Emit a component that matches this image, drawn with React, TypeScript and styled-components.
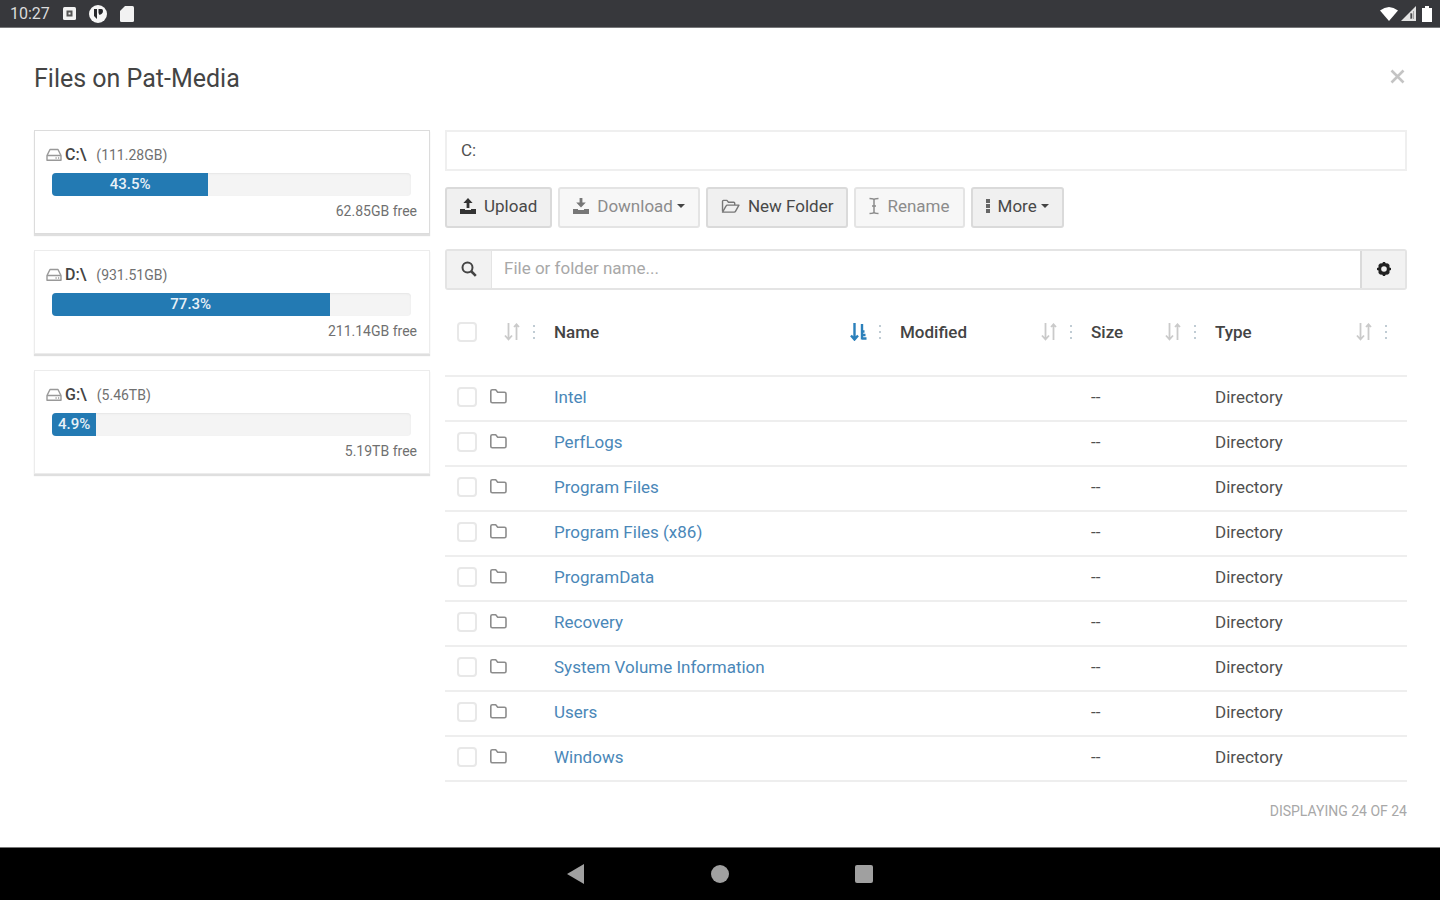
import React from "react";
import styled, { createGlobalStyle, css } from "styled-components";

const GlobalStyle = createGlobalStyle`
  *, *::before, *::after { box-sizing: border-box; }
  body {
    margin: 0;
    background: #fff;
    color: #505050;
    font-family: Roboto, "Liberation Sans", sans-serif;
    font-size: 17px;
    line-height: 20px;
  }
  button, input { font: inherit; color: inherit; }
  svg { display: block; flex: none; }
`;

const Screen = styled.div`
  display: flex;
  flex-direction: column;
  min-height: 100vh;
`;

const StatusBar = styled.div`
  display: flex;
  align-items: center;
  justify-content: space-between;
  height: 28px;
  padding: 0 8px 0 10px;
  border-bottom: 1px solid #77787a;
  background: #37383c;
  color: #dcdcdc;
  font-size: 16px;
`;

const StatusGroup = styled.div<{ $gap: number }>`
  display: flex;
  align-items: center;
  gap: ${(p) => p.$gap}px;
`;

const Page = styled.main`
  flex: 1;
  padding: 36px 33px 0 34px;
`;

const Header = styled.header`
  display: flex;
  justify-content: space-between;
  align-items: center;
  height: 30px;
  margin-bottom: 36px;
`;

const Title = styled.h1`
  margin: 0;
  color: #444;
  font-size: 25px;
  font-weight: 400;
  line-height: 30px;
`;

const IconButton = styled.button`
  display: flex;
  padding: 0;
  border: 0;
  background: none;
  cursor: pointer;
`;

const CloseButton = styled(IconButton)`
  padding: 0 2px 6px 0;
`;

const Columns = styled.div`
  display: grid;
  grid-template-columns: 7fr 17fr;
  gap: 15px;
`;

const DriveList = styled.div`
  display: flex;
  flex-direction: column;
  gap: 16px;
`;

const DriveCard = styled.section<{ $active?: boolean }>`
  padding: 14px 12px 12px 11px;
  border: 1px solid ${(p) => (p.$active ? "#dcdcdc" : "#ececec")};
  box-shadow: 0 2px 1px #dfdfdf;
  font-size: 14px;
`;

const DriveLabel = styled.div`
  display: flex;
  align-items: center;
  gap: 3px;
  color: #707070;
`;

const DriveName = styled.span`
  margin-right: 7px;
  color: #444;
  font-size: 16px;
  font-weight: 500;
`;

const Track = styled.div`
  height: 23px;
  margin: 8px 6px 5px;
  overflow: hidden;
  border-radius: 4px;
  background: #f4f4f4;
  box-shadow: inset 0 1px 2px #e6e6e6;
`;

const Fill = styled.div`
  height: 100%;
  background: #237ab3;
  color: #e8f1f7;
  font-size: 15px;
  font-weight: 500;
  line-height: 23px;
  text-align: center;
`;

const Free = styled.div`
  color: #707070;
  text-align: right;
`;

const PathInput = styled.input`
  display: block;
  width: 100%;
  height: 41px;
  padding: 0 14px 2px;
  border: 2px solid #efefef;
  outline: none;
`;

const Toolbar = styled.div`
  display: flex;
  gap: 6px;
  margin: 16px 0 21px;
`;

const ToolButton = styled.button`
  display: flex;
  align-items: center;
  gap: 8px;
  height: 41px;
  padding: 0 13px 3px;
  border: 2px solid #dadada;
  border-radius: 3px;
  background: #f0f0f0;
  color: #484848;
  white-space: nowrap;

  &:disabled {
    border-color: #e4e4e4;
    background: #f7f7f7;
    color: #8c8c8c;
  }
`;

const MenuLabel = styled.span`
  display: flex;
  align-items: center;
  gap: 4px;
`;

const SearchBar = styled.div`
  display: flex;
  height: 41px;
  border: 2px solid #e4e4e4;
  border-radius: 3px;
`;

const addon = css`
  display: flex;
  align-items: center;
  justify-content: center;
  width: 45px;
  background: #f2f2f2;
`;

const SearchLabel = styled.label`
  ${addon}
  border-right: 1px solid #e4e4e4;
`;

const SettingsButton = styled.button`
  ${addon}
  padding: 0;
  border: 0;
  border-left: 2px solid #dadada;
`;

const SearchInput = styled.input`
  flex: 1;
  min-width: 0;
  padding: 0 12px 3px;
  border: 0;
  outline: none;
  &::placeholder { color: #a8a8a8; opacity: 1; }
`;

const FileTable = styled.table`
  width: 100%;
  margin-top: 20px;
  border-collapse: collapse;
  table-layout: fixed;
`;

const Col = styled.col<{ $width: number }>`
  width: ${(p) => p.$width}px;
`;

const HeadCell = styled.th<{ $last?: boolean }>`
  height: 66px;
  padding: 12px ${(p) => (p.$last ? 19 : 10)}px 0 8px;
  border-bottom: 2px solid #eee;
  color: #444;
  font-weight: 500;
  text-align: left;
  vertical-align: top;
`;

const HeadInner = styled.div`
  display: flex;
  align-items: center;
  justify-content: space-between;
  height: 20px;
`;

const HeadTools = styled.div`
  display: flex;
  align-items: center;
  gap: 12px;
`;

const Cell = styled.td`
  height: 45px;
  padding: 0 8px 4px;
  border-bottom: 2px solid #eee;
`;

const SelectCell = styled.div`
  display: flex;
  align-items: center;
  gap: 13px;
  padding-left: 4px;
`;

const Checkbox = styled.input`
  appearance: none;
  width: 20px;
  height: 20px;
  margin: 0 0 0 4px;
  border: 2px solid #e8e8e8;
  border-radius: 4px;
  background: #fff;

  ${SelectCell} & { margin: 0; }
`;

const FileLink = styled.a`
  color: #4a87b8;
  text-decoration: none;
`;

const Summary = styled.p`
  margin: 19px 0 0;
  color: #a8a8a8;
  font-size: 14px;
  text-align: right;
`;

const NavBar = styled.nav`
  display: flex;
  align-items: center;
  justify-content: center;
  gap: 124px;
  height: 53px;
  border-top: 1px solid #777;
  background: #000;
`;

const DriveIcon = () => (
  <svg width="16" height="14" viewBox="0 0 16 14" fill="none" stroke="#999" strokeWidth="1.4">
    <path d="M1 7.500 4 1.500h8l3 6v4.800H1zM1 7.500h14" strokeLinejoin="round" />
    <path d="M9.500 10h1.200M12 10h1.200" />
  </svg>
);

const TransferIcon = ({ down }: { down?: boolean }) => (
  <svg width="16" height="16" viewBox="0 0 16 16" fill={down ? "#777" : "#333"}>
    <path d={down ? "M6.6 0h2.800v4.500h3.400L8 9.600 3.200 4.500h3.400z" : "M8 0l4.600 5H9.400v5H6.600V5H3.400z"} />
    <path d="M0 11h5v1h6v-1h5v5H0z" />
  </svg>
);

const FolderOpenIcon = () => (
  <svg width="19" height="15" viewBox="0 0 20 16" fill="none" stroke="#777" strokeWidth="1.500" strokeLinejoin="round">
    <path d="M1.500 13V2.500q0-1 1-1h3.700l1.600 2h5.700q1 0 1 1v2" />
    <path d="M1.500 14 5.300 7.300q.4-.8 1.200-.8H19l-3.700 6.700q-.4.8-1.300.8z" />
  </svg>
);

const CursorIcon = () => (
  <svg width="10" height="18" viewBox="1 0 10 18" fill="none" stroke="currentColor" strokeWidth="1.500">
    <path d="M1.500 1.500Q6 1.500 6 3v12q0 1.500-4.500 1.500M10.500 1.500Q6 1.500 6 3M10.500 16.500Q6 16.500 6 15M4 9h4" />
  </svg>
);

const MoreIcon = () => (
  <svg width="4" height="14" viewBox="0 0 4 14" fill="#666">
    <path d="M0 0h4v4H0zM0 5h4v4H0zM0 10h4v4H0z" />
  </svg>
);

const Caret = () => (
  <svg width="8" height="4" viewBox="0 0 8 4" fill="#444"><path d="M0 0h8L4 4z" /></svg>
);

const SearchIcon = () => (
  <svg width="16" height="18" viewBox="0 0 16 18" fill="none" stroke="#444">
    <circle cx="6.500" cy="6.500" r="5" strokeWidth="2" />
    <path d="M10 10l4.800 4.800" strokeWidth="2.600" />
  </svg>
);

const GearIcon = () => (
  <svg width="14" height="16" viewBox="0 0 14 16">
    <path d="M6 0h2l.6 1.300L11 1.500 12.500 3v2.400L14 6v2l-1.500.6V11L11 12.500l-2.400.2L8 14H6l-.6-1.300L3 12.500 1.500 11V8.600L0 8V6l1.500-.6V3L3 1.500l2.400-.2z" fill="#222" />
    <circle cx="7" cy="7" r="2.800" fill="#f0f0f0" />
  </svg>
);

const SortIcon = ({ active }: { active?: boolean }) => (
  <svg width="17" height="18" viewBox="0 0 17 18" fill="none" stroke={active ? "#2b80bb" : "#cacaca"} strokeWidth={active ? 2.4 : 1.8}>
    <path d="M4.500 0v16.500M1 12.500l3.500 4 3.500-4" />
    {active ? (
      <path d="M12 1v15.500M12 8.500h2.500M12 12h3.500M12 15.500h4.500" />
    ) : (
      <path d="M12.500 17V1.500M10 4l2.500-2.700L15 4" />
    )}
  </svg>
);

const DotsIcon = () => (
  <svg width="3" height="14" viewBox="0 0 3 14" fill="#c0ccd4">
    <path d="M0 0h2v2H0zM0 6h2v2H0zM0 12h2v2H0z" />
  </svg>
);

const FolderIcon = () => (
  <svg width="17" height="15" viewBox="0 0 17 15" fill="none" stroke="#8c8c8c" strokeWidth="1.600" strokeLinejoin="round">
    <path d="M.8 12.200V2.300q0-1.500 1.500-1.500h3.400l2 2.400h6.800q1.500 0 1.500 1.500v7.500q0 1.500-1.500 1.500H2.300q-1.500 0-1.500-1.500z" />
  </svg>
);

const drives = [
  { name: "C:\\", size: "111.28GB", used: 43.5, free: "62.85GB", bar: 43.5 },
  { name: "D:\\", size: "931.51GB", used: 77.3, free: "211.14GB", bar: 77.3 },
  { name: "G:\\", size: "5.46TB", used: 4.9, free: "5.19TB", bar: 12.3 },
];

const headings = [
  { label: "Name", active: true },
  { label: "Modified" },
  { label: "Size" },
  { label: "Type", last: true },
];

const folders = [
  "Intel", "PerfLogs", "Program Files", "Program Files (x86)", "ProgramData",
  "Recovery", "System Volume Information", "Users", "Windows",
];

const SortTools = ({ label, active }: { label: string; active?: boolean }) => (
  <HeadTools>
    <IconButton aria-label={`Sort by ${label}`}><SortIcon active={active} /></IconButton>
    <IconButton aria-label={`${label} column options`}><DotsIcon /></IconButton>
  </HeadTools>
);

export default function App() {
  return (
    <Screen>
      <GlobalStyle />
      <StatusBar>
        <StatusGroup $gap={13}>
          <span>10:27</span>
          <svg width="13" height="13" viewBox="0 0 13 13">
            <rect width="13" height="13" rx="1.500" fill="#f2f2f2" />
            <rect x="3.500" y="3.500" width="6" height="6" fill="#555" />
            <rect x="5.500" y="5.500" width="2" height="2" fill="#f2f2f2" />
          </svg>
          <svg width="18" height="18" viewBox="0 0 18 18">
            <circle cx="9" cy="9" r="9" fill="#f6f6f6" />
            <path d="M5 4h3v10l-3-3zM9.500 4h3q1.500 0 1.500 2t-1.500 3l-2 1-1-2z" fill="#26272b" />
          </svg>
          <svg width="14" height="16" viewBox="0 0 14 16">
            <path d="M5 0h7.500Q14 0 14 1.500v13q0 1.500-1.500 1.500h-11Q0 16 0 14.500V5z" fill="#f2f2f2" />
          </svg>
        </StatusGroup>
        <StatusGroup $gap={3}>
          <svg width="18" height="14" viewBox="0 0 18 14"><path d="M0 3.500Q9-3.500 18 3.500L9 14z" fill="#fff" /></svg>
          <svg width="18" height="15" viewBox="0 0 18 15">
            <path d="M15 0v15H0z" fill="#e2e2e2" />
            <path d="M9.500 7.500h1.500v5h-1.500zM12.500 5v8" fill="#37383c" stroke="#777" strokeWidth=".6" />
          </svg>
          <svg width="10" height="16" viewBox="0 0 10 16"><path d="M3 0h4v2h3v14H0V2h3z" fill="#fff" /></svg>
        </StatusGroup>
      </StatusBar>

      <Page>
        <Header>
          <Title>Files on Pat-Media</Title>
          <CloseButton aria-label="Close">
            <svg width="15" height="15" viewBox="0 0 15 15" stroke="#c4c4c4" strokeWidth="2.600"><path d="M1.500 1.500l12 12M13.500 1.500l-12 12" /></svg>
          </CloseButton>
        </Header>

        <Columns>
          <DriveList>
            {drives.map((d, i) => (
              <DriveCard key={d.name} $active={i === 0}>
                <DriveLabel>
                  <DriveIcon />
                  <DriveName>{d.name}</DriveName>
                  <span>({d.size})</span>
                </DriveLabel>
                <Track>
                  <Fill style={{ width: `${d.bar}%` }}>{d.used}%</Fill>
                </Track>
                <Free>{d.free} free</Free>
              </DriveCard>
            ))}
          </DriveList>

          <div>
            <PathInput aria-label="Path" defaultValue="C:" />
            <Toolbar>
              <ToolButton><TransferIcon />Upload</ToolButton>
              <ToolButton disabled><TransferIcon down /><MenuLabel>Download<Caret /></MenuLabel></ToolButton>
              <ToolButton><FolderOpenIcon />New Folder</ToolButton>
              <ToolButton disabled><CursorIcon />Rename</ToolButton>
              <ToolButton><MoreIcon /><MenuLabel>More<Caret /></MenuLabel></ToolButton>
            </Toolbar>
            <SearchBar>
              <SearchLabel htmlFor="search" aria-label="Search"><SearchIcon /></SearchLabel>
              <SearchInput id="search" placeholder="File or folder name..." />
              <SettingsButton aria-label="Search settings"><GearIcon /></SettingsButton>
            </SearchBar>

            <FileTable>
              <colgroup>
                <Col $width={101} />
                <Col $width={346} />
                <Col $width={191} />
                <Col $width={124} />
                <Col $width={200} />
              </colgroup>
              <thead>
                <tr>
                  <HeadCell>
                    <HeadInner>
                      <Checkbox type="checkbox" aria-label="Select all" />
                      <SortTools label="kind" />
                    </HeadInner>
                  </HeadCell>
                  {headings.map((h) => (
                    <HeadCell key={h.label} $last={h.last}>
                      <HeadInner>
                        {h.label}
                        <SortTools label={h.label} active={h.active} />
                      </HeadInner>
                    </HeadCell>
                  ))}
                </tr>
              </thead>
              <tbody>
                {folders.map((name) => (
                  <tr key={name}>
                    <Cell>
                      <SelectCell>
                        <Checkbox type="checkbox" aria-label={`Select ${name}`} />
                        <FolderIcon />
                      </SelectCell>
                    </Cell>
                    <Cell><FileLink href="#">{name}</FileLink></Cell>
                    <Cell />
                    <Cell>--</Cell>
                    <Cell>Directory</Cell>
                  </tr>
                ))}
              </tbody>
            </FileTable>
            <Summary>DISPLAYING 24 OF 24</Summary>
          </div>
        </Columns>
      </Page>

      <NavBar aria-label="System">
        <IconButton aria-label="Back"><svg width="20" height="20" viewBox="0 0 20 20" fill="#a0a0a0"><path d="M1 10L18 0v20z" /></svg></IconButton>
        <IconButton aria-label="Home"><svg width="20" height="20" viewBox="0 0 20 20" fill="#a0a0a0"><circle cx="10" cy="10" r="9" /></svg></IconButton>
        <IconButton aria-label="Recent apps"><svg width="20" height="20" viewBox="0 0 20 20" fill="#a0a0a0"><rect x="1" y="1" width="18" height="18" rx="2" /></svg></IconButton>
      </NavBar>
    </Screen>
  );
}
